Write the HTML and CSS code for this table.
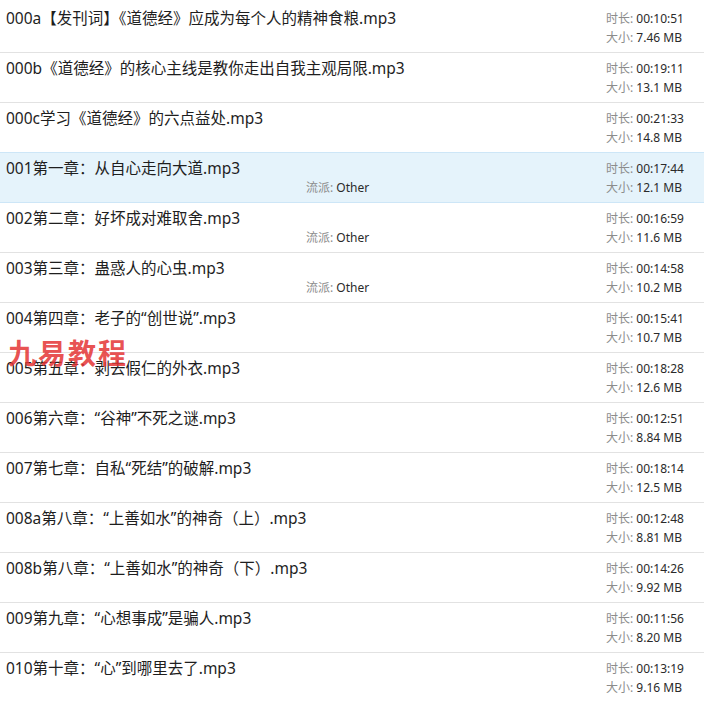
FILE: index.html
```html
<!DOCTYPE html>
<html lang="zh-CN">
<head>
<meta charset="utf-8">
<title>道德经 音频列表</title>
<link rel="stylesheet" href="styles.css">
</head>
<body>
<div class="list">
  <div class="row"><div class="title">000a【发刊词】《道德经》应成为每个人的精神食粮.mp3</div><div class="info"><div><span class="lbl">时长:</span> 00:10:51</div><div><span class="lbl">大小:</span> 7.46 MB</div></div></div>
  <div class="row"><div class="title">000b《道德经》的核心主线是教你走出自我主观局限.mp3</div><div class="info"><div><span class="lbl">时长:</span> 00:19:11</div><div><span class="lbl">大小:</span> 13.1 MB</div></div></div>
  <div class="row"><div class="title">000c学习《道德经》的六点益处.mp3</div><div class="info"><div><span class="lbl">时长:</span> 00:21:33</div><div><span class="lbl">大小:</span> 14.8 MB</div></div></div>
  <div class="row selected"><div class="title">001第一章：从自心走向大道.mp3</div><div class="genre"><span class="lbl">流派:</span> Other</div><div class="info"><div><span class="lbl">时长:</span> 00:17:44</div><div><span class="lbl">大小:</span> 12.1 MB</div></div></div>
  <div class="row"><div class="title">002第二章：好坏成对难取舍.mp3</div><div class="genre"><span class="lbl">流派:</span> Other</div><div class="info"><div><span class="lbl">时长:</span> 00:16:59</div><div><span class="lbl">大小:</span> 11.6 MB</div></div></div>
  <div class="row"><div class="title">003第三章：蛊惑人的心虫.mp3</div><div class="genre"><span class="lbl">流派:</span> Other</div><div class="info"><div><span class="lbl">时长:</span> 00:14:58</div><div><span class="lbl">大小:</span> 10.2 MB</div></div></div>
  <div class="row"><div class="title">004第四章：老子的“创世说”.mp3</div><div class="info"><div><span class="lbl">时长:</span> 00:15:41</div><div><span class="lbl">大小:</span> 10.7 MB</div></div></div>
  <div class="row"><div class="title">005第五章：剥去假仁的外衣.mp3</div><div class="info"><div><span class="lbl">时长:</span> 00:18:28</div><div><span class="lbl">大小:</span> 12.6 MB</div></div></div>
  <div class="row"><div class="title">006第六章：“谷神”不死之谜.mp3</div><div class="info"><div><span class="lbl">时长:</span> 00:12:51</div><div><span class="lbl">大小:</span> 8.84 MB</div></div></div>
  <div class="row"><div class="title">007第七章：自私“死结”的破解.mp3</div><div class="info"><div><span class="lbl">时长:</span> 00:18:14</div><div><span class="lbl">大小:</span> 12.5 MB</div></div></div>
  <div class="row"><div class="title">008a第八章：“上善如水”的神奇（上）.mp3</div><div class="info"><div><span class="lbl">时长:</span> 00:12:48</div><div><span class="lbl">大小:</span> 8.81 MB</div></div></div>
  <div class="row"><div class="title">008b第八章：“上善如水”的神奇（下）.mp3</div><div class="info"><div><span class="lbl">时长:</span> 00:14:26</div><div><span class="lbl">大小:</span> 9.92 MB</div></div></div>
  <div class="row"><div class="title">009第九章：“心想事成”是骗人.mp3</div><div class="info"><div><span class="lbl">时长:</span> 00:11:56</div><div><span class="lbl">大小:</span> 8.20 MB</div></div></div>
  <div class="row"><div class="title">010第十章：“心”到哪里去了.mp3</div><div class="info"><div><span class="lbl">时长:</span> 00:13:19</div><div><span class="lbl">大小:</span> 9.16 MB</div></div></div>
  <div class="watermark">九易教程</div>
</div>
</body>
</html>
```
FILE: styles.css
```css
html, body {
  margin: 0;
  padding: 0;
  background: #ffffff;
}
body {
  font-family: "Noto Sans", "Noto Sans CJK SC", sans-serif;
  color: #1f1f1f;
  overflow: hidden;
}
.list {
  position: relative;
  width: 704px;
  padding-top: 3px;
}
.row {
  display: grid;
  grid-template-columns: 300px 300px 1fr;
  grid-template-rows: 20px 19px;
  box-sizing: border-box;
  height: 50px;
  padding-left: 6px;
  padding-top: 5px;
  border-bottom: 1px solid #e2e2e2;
}
.row.selected {
  background: #e5f3fb;
  border-top: 1px solid #cde6f7;
  border-bottom-color: #cde6f7;
  margin-top: -1px;
  height: 51px;
}
.title {
  grid-column: 1 / 3;
  grid-row: 1;
  font-size: 15.5px;
  line-height: 20px;
  white-space: nowrap;
  color: #1e1e1e;
}
.genre {
  grid-column: 2;
  grid-row: 2;
  font-size: 12px;
  line-height: 19px;
  color: #2a2a2a;
}
.info {
  grid-column: 3;
  grid-row: 1 / 3;
  font-size: 12px;
  line-height: 19px;
  padding-top: 1px;
  color: #2a2a2a;
  white-space: nowrap;
}
.lbl {
  color: #8c8c8c;
}
.watermark {
  position: absolute;
  left: 8px;
  top: 334px;
  font-size: 28px;
  line-height: 36px;
  font-weight: 700;
  font-family: "Noto Sans CJK SC", sans-serif;
  color: rgba(228, 52, 52, 0.85);
  letter-spacing: 2px;
}
```
